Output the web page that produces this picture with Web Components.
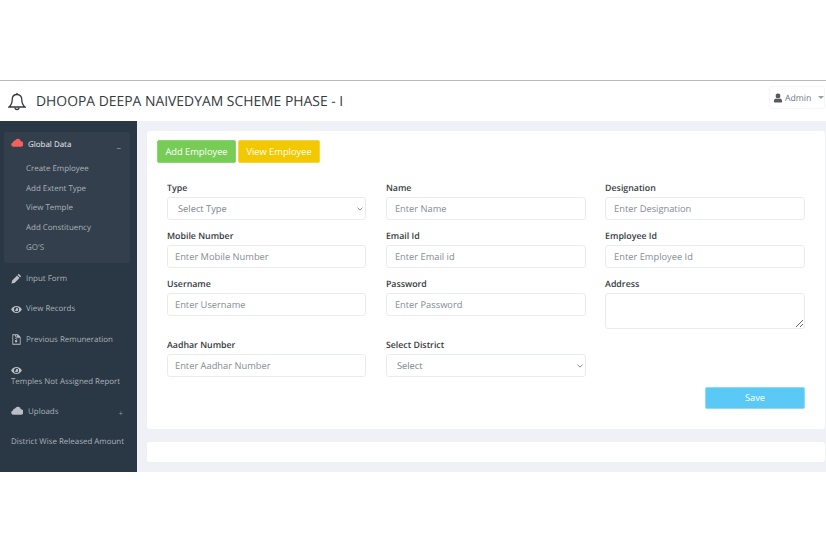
<!DOCTYPE html>
<html>
<head>
<meta charset="utf-8">
<title>Create Employee</title>
<style>
    html, body { margin: 0; background: #fff; }
    body { font-family: "Open Sans", sans-serif; text-rendering: geometricPrecision; }
    app-shell { margin-top: 80px; }
</style>
</head>
<body>

<app-shell>
    <top-bar slot="top" title="DHOOPA DEEPA NAIVEDYAM SCHEME PHASE - I"></top-bar>
    <side-nav slot="side">
        <nav-group icon="cloud" label="Global Data" open>
            <sub-link>Create Employee</sub-link>
            <sub-link>Add Extent Type</sub-link>
            <sub-link>View Temple</sub-link>
            <sub-link>Add Constituency</sub-link>
            <sub-link>GO'S</sub-link>
        </nav-group>
        <nav-link icon="pencil" style="height:31px">Input Form</nav-link>
        <nav-link icon="eye" gap="4" style="height:30px">View Records</nav-link>
        <nav-link icon="file" gap="4" style="height:31px">Previous Remuneration</nav-link>
        <nav-link icon="eye" stacked style="height:41px">Temples Not Assigned Report</nav-link>
        <nav-link icon="cloud" gap="5" plus style="height:31px">Uploads</nav-link>
        <nav-link style="height:29px">District Wise Released Amount</nav-link>
    </side-nav>
    <employee-form></employee-form>
</app-shell>

<script>
const ICONS = {
    cloud: '<path d="M13.5 5.2A4.2 4.2 0 0 0 5.7 4 3 3 0 0 0 2.900 6.700 2.900 2.900 0 0 0 3 12.400h10a3.600 3.600 0 0 0 .5-7.200z" fill="currentColor" transform="translate(-.3 -.8)"/>',
    pencil: '<path d="M11.300 1.200l3.500 3.500-1.600 1.600-3.500-3.500zM8.900 3.600l3.500 3.500-7.300 7.300-4.400 1 1-4.500z" fill="currentColor"/>',
    eye: '<path fill-rule="evenodd" d="M8 3c3.600 0 6.400 2.300 7.800 5-1.400 2.700-4.200 5-7.800 5S1.600 10.700.2 8C1.600 5.300 4.400 3 8 3zm0 1.300A3.700 3.700 0 1 0 8 11.700 3.700 3.700 0 0 0 8 4.300zM8 5.500a2.500 2.500 0 1 1-2.500 2.500c0 .6 1.200.6 1.600 0 .4-.6.200-1.900.9-2.500z" fill="currentColor"/>',
    file: '<path fill-rule="evenodd" d="M2 .5h8l4 4v11H2zM3.200 1.700v12.600h9.600V5.500H9V1.700H7.500v1.500H6v1.400h1.500v1.400H6v1.400h1.500v1.400H6v3.200h3V9.200H7.500V8H9V6.600H7.500V5.200H9V3.800H6V1.700z" fill="currentColor"/>',
    user: '<path d="M8 1a3.700 3.700 0 0 1 3.700 3.900A3.700 3.700 0 0 1 8 8.800 3.700 3.700 0 0 1 4.300 4.900 3.700 3.700 0 0 1 8 1zM5 8.600c.8.700 1.800 1.100 3 1.100s2.200-.4 3-1.100c2 .2 3.500 1.500 3.500 3.900v1.500a1 1 0 0 1-1 1h-11a1 1 0 0 1-1-1v-1.500c0-2.400 1.500-3.700 3.500-3.900z" fill="currentColor"/>'
}

function icon(name, w, h) {
    return `<svg viewBox="0 0 16 16" width="${w}" height="${h || w}">${ICONS[name] || ''}</svg>`
}

class AppShell extends HTMLElement {
    constructor() {
        super()
        this.attachShadow({mode: 'open'}).innerHTML = `
            <style>
                :host { display: grid; grid-template-columns: 137px 1fr; grid-template-rows: 41px 351px; width: 826px; }
                .top { grid-column: 1 / 3; }
                main { background: #f0f1f7; min-width: 0; }
            </style>
            <div class="top"><slot name="top"></slot></div>
            <slot name="side"></slot>
            <main><slot></slot></main>
        `
    }
}

class TopBar extends HTMLElement {
    constructor() {
        super()
        this.attachShadow({mode: 'open'}).innerHTML = `
            <style>
                :host { display: flex; align-items: center; height: 41px; box-sizing: border-box; border-top: 1px solid #b9b9bd; background: #fff; position: relative; }
                svg.bell { margin: 2px 0 0 8px; width: 18px; height: 20px; color: #343a40; flex: none; }
                h1 { margin: 2px 0 0 10px; font-weight: 400; font-size: 13.900px; color: #343a40; white-space: nowrap; line-height: 38px; }
                .user { position: absolute; right: 1px; top: 5px; height: 23px; width: 56px; box-sizing: border-box; border: 1px solid #f6f6f8; border-radius: 3px; display: flex; align-items: center; padding-left: 3px; gap: 2px; font-size: 8.700px; color: #6c757d; }
                .user svg { color: #555b61; flex: none; }
                .caret { margin-left: 5px; border: 3px solid transparent; border-top: 3px solid #9a9fa5; border-bottom: 0; }
            </style>
            <svg class="bell" viewBox="0 0 18 20" fill="none" stroke="currentColor" stroke-width="1.300">
                <path d="M9 2.500c-3.200 0-4.800 2.300-4.800 5.200 0 3.400-1 5.400-3.200 7.300h16c-2.200-1.900-3.200-3.900-3.200-7.300 0-2.900-1.600-5.200-4.800-5.200z"/>
                <path d="M9 1v1.500M7 15.500a2 2 0 0 0 4 0"/>
            </svg>
            <h1>${this.getAttribute('title')}</h1>
            <div class="user">${icon('user', 10)}<span>Admin</span><i class="caret"></i></div>
        `
    }
}

class SideNav extends HTMLElement {
    constructor() {
        super()
        this.attachShadow({mode: 'open'}).innerHTML = `
            <style>
                :host { display: flex; flex-direction: column; background: #2a3744; padding: 12px 7px 0 4px; box-sizing: border-box; overflow: hidden; border-top: 1px solid #4a5560; margin-top: -1px; height: 352px; font-size: 7.950px; color: #b2b8bf; }
                ::slotted(nav-group) { margin-top: -1px; padding-top: 1px; }
            </style>
            <slot></slot>
        `
    }
}

class NavGroup extends HTMLElement {
    constructor() {
        super()
        this.attachShadow({mode: 'open'}).innerHTML = `
            <style>
                :host { display: block; background: #333f4c; border-radius: 3px; height: 131px; box-sizing: border-box; }
                .head { display: flex; align-items: center; height: 24px; padding: 0 7px; color: #e8eaec; }
                svg { color: #f4605c; flex: none; margin-right: 5px; margin-top: -3px; }
                .sign { margin-left: auto; margin-right: 2px; margin-top: 4px; color: #9aa1a8; font-size: 9px; }
                .list { display: flex; flex-direction: column; padding-top: 2px; }
            </style>
            <div class="head">${icon(this.getAttribute('icon'), 12)}<span>${this.getAttribute('label')}</span><span class="sign">–</span></div>
            <div class="list"><slot></slot></div>
        `
    }
}

class SubLink extends HTMLElement {
    constructor() {
        super()
        this.attachShadow({mode: 'open'}).innerHTML = `
            <style>
                :host { display: flex; align-items: center; height: 19.750px; padding-left: 22px; color: #aab1b8; white-space: nowrap; }
            </style>
            <slot></slot>
        `
    }
}

class NavLink extends HTMLElement {
    constructor() {
        super()
        const name = this.getAttribute('icon')
        const stacked = this.hasAttribute('stacked')
        const sizes = {cloud: 12, eye: 11, pencil: 11, file: 11}
        this.attachShadow({mode: 'open'}).innerHTML = `
            <style>
                :host { display: flex; align-items: center; padding-left: 7px; padding-right: 5px; box-sizing: border-box; color: #a9b0b7; white-space: nowrap; }
                :host([stacked]) { flex-direction: column; align-items: flex-start; justify-content: center; gap: 1px; }
                svg { color: #b9bfc5; flex: none; margin-right: ${stacked ? 0 : (this.getAttribute('gap') || 4)}px; }
                .plus { margin-left: auto; margin-top: 5px; margin-right: 2px; color: #8d949b; }
            </style>
            ${name ? icon(name, sizes[name]) : ''}
            <span><slot></slot></span>
            ${this.hasAttribute('plus') ? '<span class="plus">+</span>' : ''}
        `
    }
}

class FormField extends HTMLElement {
    constructor() {
        super()
        const label = this.getAttribute('label')
        const hint = this.getAttribute('hint')
        const type = this.getAttribute('type') || 'input'
        let control = `<input placeholder="${hint}">`
        if (type == 'select') {
            control = `<div class="sel"><select><option>${hint}</option></select>
                <svg viewBox="0 0 8 5" width="6" height="4"><path d="M.7.8L4 4l3.300-3.200" fill="none" stroke="#555b61" stroke-width="1"/></svg></div>`
        } else if (type == 'area') {
            control = `<textarea></textarea>`
        }
        this.attachShadow({mode: 'open'}).innerHTML = `
            <style>
                :host { display: block; min-width: 0; }
                label { display: block; font-weight: 600; font-size: 8.800px; line-height: 12px; color: #343a40; margin-bottom: 3px; }
                input, select, textarea {
                    display: block; width: 100%; height: 23px; box-sizing: border-box; margin: 0;
                    border: 1px solid #e9ecef; border-radius: 3px; background: #fff; text-rendering: geometricPrecision;
                    font: 400 9.300px "Open Sans", sans-serif; color: #7b8288; padding: 0 0 0 var(--pad, 8px); outline: 0;
                }
                input::placeholder { color: #858b91; opacity: 1; }
                select { appearance: none; -webkit-appearance: none; padding-left: 10px; }
                textarea { height: 36px; resize: vertical; }
                .sel { position: relative; }
                .sel svg { position: absolute; right: 3px; top: 10px; }
            </style>
            <label>${label}</label>
            ${control}
        `
    }
}

class ActionButton extends HTMLElement {
    constructor() {
        super()
        this.attachShadow({mode: 'open'}).innerHTML = `
            <style>
                :host { display: inline-flex; align-items: center; justify-content: center; height: 23px; box-sizing: border-box; white-space: nowrap; border-radius: 2px; font-size: 9.300px; color: #fff; background: var(--bg); border: 1px solid var(--bd); }
            </style>
            <slot></slot>
        `
    }
}

class EmployeeForm extends HTMLElement {
    constructor() {
        super()
        this.attachShadow({mode: 'open'}).innerHTML = `
            <style>
                :host { display: block; padding: 10px 1px 0 10px; }
                .card { background: #fff; border-radius: 3px; }
                .main { height: 298px; box-sizing: border-box; padding: 9px 20px 0 10px; }
                .tabs { display: flex; gap: 2px; }
                .grid { display: grid; grid-template-columns: 199.400px 199.700px 200px; column-gap: 19.500px; margin: 19px 0 0 10px; align-items: start; grid-template-rows: 48px 48px 60.500px 33px; }
                .save { display: flex; justify-content: flex-end; margin-top: 15px; }
                .foot { height: 20px; margin-top: 13px; }
            </style>
            <div class="card main">
                <div class="tabs">
                    <action-button style="--bg:#77cc55;--bd:#8bd36d;width:79px">Add Employee</action-button>
                    <action-button style="--bg:#f2c800;--bd:#f5d540;width:82px">View Employee</action-button>
                </div>
                <div class="grid">
                    <form-field label="Type" type="select" hint="Select Type"></form-field>
                    <form-field label="Name" hint="Enter Name"></form-field>
                    <form-field label="Designation" hint="Enter Designation"></form-field>
                    <form-field label="Mobile Number" hint="Enter Mobile Number" style="--pad:7px"></form-field>
                    <form-field label="Email Id" hint="Enter Email id"></form-field>
                    <form-field label="Employee Id" hint="Enter Employee Id"></form-field>
                    <form-field label="Username" hint="Enter Username" style="--pad:7px"></form-field>
                    <form-field label="Password" hint="Enter Password"></form-field>
                    <form-field label="Address" type="area"></form-field>
                    <form-field label="Aadhar Number" hint="Enter Aadhar Number" style="--pad:7px"></form-field>
                    <form-field label="Select District" type="select" hint="Select"></form-field>
                </div>
                <div class="save">
                    <action-button style="--bg:#5bc9f5;--bd:#8bdaf8;width:100px;height:22px">Save</action-button>
                </div>
            </div>
            <div class="card foot"></div>
        `
    }
}

customElements.define('app-shell', AppShell)
customElements.define('top-bar', TopBar)
customElements.define('side-nav', SideNav)
customElements.define('nav-group', NavGroup)
customElements.define('sub-link', SubLink)
customElements.define('nav-link', NavLink)
customElements.define('form-field', FormField)
customElements.define('action-button', ActionButton)
customElements.define('employee-form', EmployeeForm)
</script>
</body>
</html>
